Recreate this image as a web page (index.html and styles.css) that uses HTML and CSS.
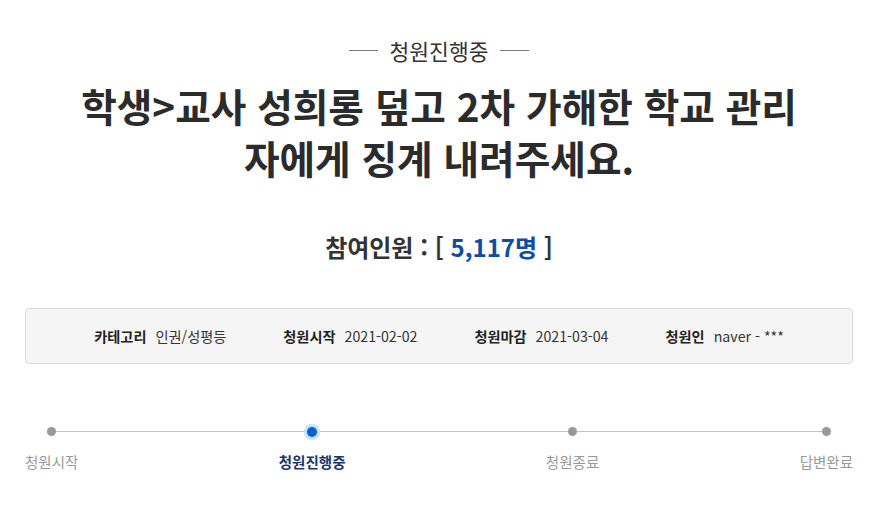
FILE: index.html
```html
<!DOCTYPE html>
<html lang="ko">
<head>
<meta charset="utf-8">
<link rel="stylesheet" href="styles.css">
</head>
<body>
<div class="page">
  <div class="status"><span class="dash"></span><span class="status-text">청원진행중</span><span class="dash"></span></div>
  <h1 class="title">학생&gt;교사 성희롱 덮고 2차 가해한 학교 관리<br>자에게 징계 내려주세요.</h1>
  <div class="count">참여인원 : [ <span class="num">5,117명</span> ]</div>
  <div class="info">
    <div class="item"><span class="label">카테고리</span><span class="value">인권/성평등</span></div>
    <div class="item"><span class="label">청원시작</span><span class="value">2021-02-02</span></div>
    <div class="item"><span class="label">청원마감</span><span class="value">2021-03-04</span></div>
    <div class="item"><span class="label">청원인</span><span class="value">naver - ***</span></div>
  </div>
  <div class="progress">
    <div class="track"></div>
    <div class="step"><span class="dot"></span><span class="step-label">청원시작</span></div>
    <div class="step active"><span class="dot"></span><span class="step-label">청원진행중</span></div>
    <div class="step"><span class="dot"></span><span class="step-label">청원종료</span></div>
    <div class="step"><span class="dot"></span><span class="step-label">답변완료</span></div>
  </div>
</div>
</body>
</html>
```
FILE: styles.css
```css
* { box-sizing: border-box; }
body {
  margin: 0;
  background: #fff;
  font-family: "Noto Sans CJK KR", "Noto Sans", sans-serif;
  color: #333;
}
.page {
  width: 828px;
  margin-left: 25px;
  padding-top: 36px;
}
.status {
  display: flex;
  justify-content: center;
  align-items: center;
  gap: 12px;
  height: 28px;
}
.dash {
  width: 29px;
  height: 1px;
  background: #777;
}
.status-text {
  font-size: 21.5px;
  color: #333;
}
.title {
  margin: 15px 0 0;
  text-align: center;
  font-size: 38.7px;
  font-weight: 700;
  line-height: 52px;
  color: #2b2b2b;
}
.count {
  margin-top: 47px;
  text-align: center;
  font-size: 24px;
  font-weight: 700;
  line-height: 34px;
  color: #333;
}
.num { color: #0b4ea2; }
.info {
  margin-top: 44px;
  height: 56px;
  background: #f5f5f5;
  border: 1px solid #d9d9d9;
  border-radius: 4px;
  display: flex;
  justify-content: center;
  align-items: center;
  gap: 57px;
  font-size: 14.2px;
}
.item { display: flex; gap: 9px; align-items: baseline; }
.label { font-weight: 700; color: #222; }
.value { color: #333; }
.progress {
  position: relative;
  margin-top: 59px;
  display: flex;
  justify-content: space-between;
}
.track {
  position: absolute;
  left: 25px;
  right: 27px;
  top: 8px;
  height: 1px;
  background: #c4c4c4;
}
.step {
  position: relative;
  display: flex;
  flex-direction: column;
  align-items: center;
  gap: 16px;
}
.dot {
  width: 9px;
  height: 9px;
  margin-top: 4px;
  border-radius: 50%;
  background: #999;
}
.step.active .dot {
  width: 10px;
  height: 10px;
  margin-top: 3.5px;
  margin-bottom: -1px;
  background: #0a63c9;
  box-shadow: 0 0 0 3px #c7e0fb;
}
.step-label {
  font-size: 14.5px;
  color: #999;
  line-height: 20px;
}
.step.active .step-label {
  font-size: 14.5px;
  color: #1b3668;
  font-weight: 700;
}
```
